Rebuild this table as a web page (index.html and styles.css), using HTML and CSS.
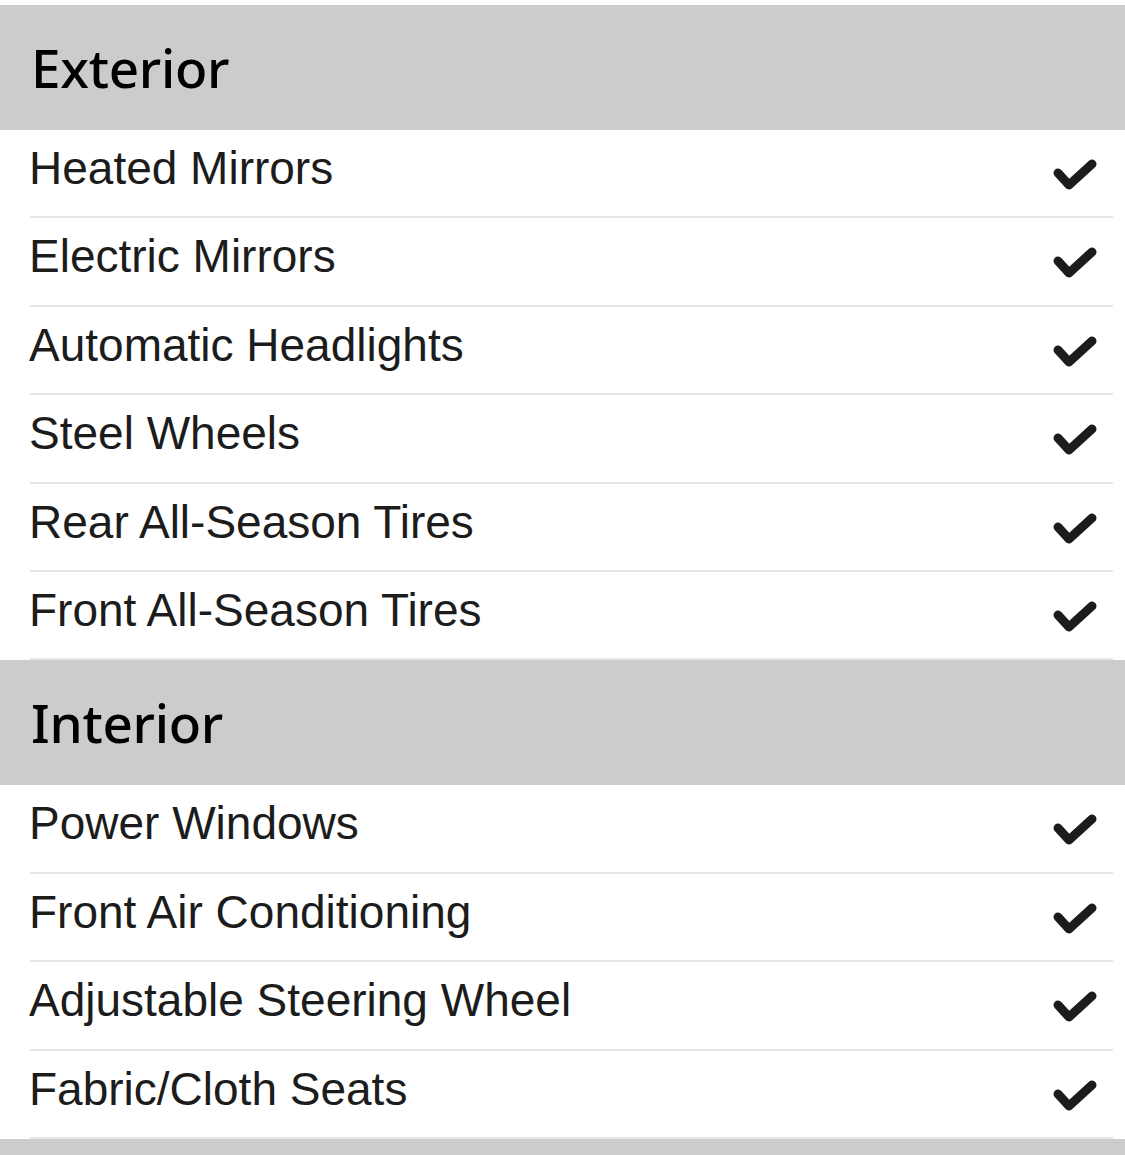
FILE: index.html
```html
<!DOCTYPE html>
<html>
<head>
<meta charset="utf-8">
<link rel="stylesheet" href="styles.css">
</head>
<body>
<div class="page">
  <section class="group">
    <h2 class="group-title">Exterior</h2>
    <ul class="items">
      <li class="item"><span class="label">Heated Mirrors</span><svg class="check" viewBox="0 0 46 34"><polyline points="6,15 17,27 40,6"/></svg></li>
      <li class="item"><span class="label">Electric Mirrors</span><svg class="check" viewBox="0 0 46 34"><polyline points="6,15 17,27 40,6"/></svg></li>
      <li class="item"><span class="label">Automatic Headlights</span><svg class="check" viewBox="0 0 46 34"><polyline points="6,15 17,27 40,6"/></svg></li>
      <li class="item"><span class="label">Steel Wheels</span><svg class="check" viewBox="0 0 46 34"><polyline points="6,15 17,27 40,6"/></svg></li>
      <li class="item"><span class="label">Rear All-Season Tires</span><svg class="check" viewBox="0 0 46 34"><polyline points="6,15 17,27 40,6"/></svg></li>
      <li class="item"><span class="label">Front All-Season Tires</span><svg class="check" viewBox="0 0 46 34"><polyline points="6,15 17,27 40,6"/></svg></li>
    </ul>
  </section>
  <section class="group">
    <h2 class="group-title">Interior</h2>
    <ul class="items">
      <li class="item"><span class="label">Power Windows</span><svg class="check" viewBox="0 0 46 34"><polyline points="6,15 17,27 40,6"/></svg></li>
      <li class="item"><span class="label">Front Air Conditioning</span><svg class="check" viewBox="0 0 46 34"><polyline points="6,15 17,27 40,6"/></svg></li>
      <li class="item"><span class="label">Adjustable Steering Wheel</span><svg class="check" viewBox="0 0 46 34"><polyline points="6,15 17,27 40,6"/></svg></li>
      <li class="item"><span class="label">Fabric/Cloth Seats</span><svg class="check" viewBox="0 0 46 34"><polyline points="6,15 17,27 40,6"/></svg></li>
    </ul>
  </section>
  <section class="group">
    <div class="group-title group-title--empty"></div>
  </section>
</div>
</body>
</html>
```

FILE: styles.css
```css
html, body {
  margin: 0;
  padding: 0;
  background: #ffffff;
}

.page {
  padding-top: 5px;
  width: 1125px;
  height: 1155px;
  overflow: hidden;
}

.group {
  margin: 0;
}

.group-title {
  margin: 0;
  height: 125px;
  box-sizing: border-box;
  background: #cccccc;
  padding: 27px 0 0 31px;
  font-family: "Noto Sans", "Open Sans", sans-serif;
  font-weight: 500;
  font-size: 53px;
  line-height: 72px;
  letter-spacing: -0.3px;
  color: #000000;
}

.items {
  list-style: none;
  margin: 0;
  padding: 0;
}

.item {
  display: flex;
  justify-content: space-between;
  align-items: flex-start;
  height: 88.4px;
  box-sizing: border-box;
  margin-left: 30px;
  width: 1083px;
  border-bottom: 2px solid #e5e5e5;
}

.label {
  padding-top: 12px;
  margin-left: -1px;
  font-family: "Liberation Sans", Arial, sans-serif;
  font-size: 46px;
  line-height: 52px;
  color: #1c1c1c;
}

.check {
  width: 46px;
  height: 34px;
  margin-top: 28px;
  margin-right: 15px;
  flex: none;
}

.check polyline {
  fill: none;
  stroke: #1c1c1c;
  stroke-width: 9;
  stroke-linecap: round;
  stroke-linejoin: round;
}
```
